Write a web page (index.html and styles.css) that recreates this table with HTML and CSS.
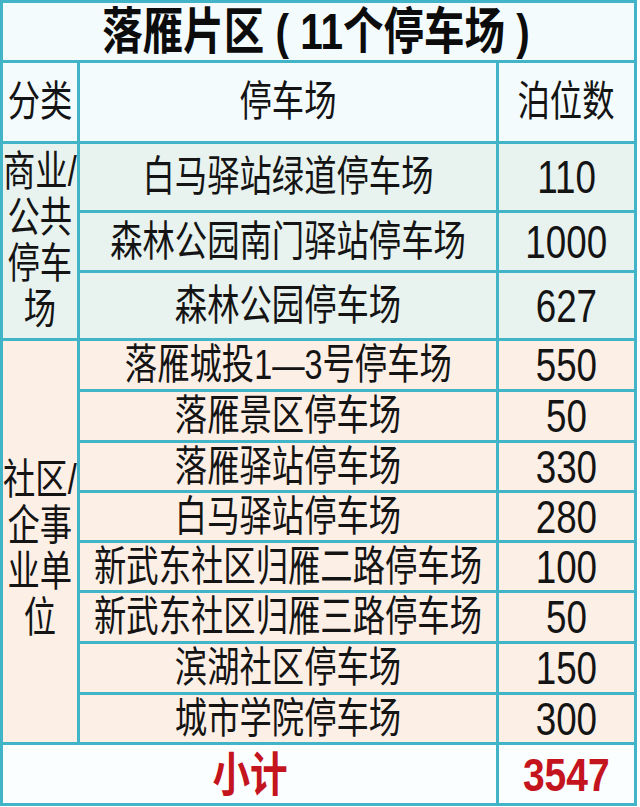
FILE: index.html
```html
<!DOCTYPE html>
<html lang="zh-CN">
<head>
<meta charset="utf-8">
<title>落雁片区停车场</title>
<link rel="stylesheet" href="styles.css">
</head>
<body>
<div class="table">
  <div class="cell title"><span class="t">落雁片区 ( 11个停车场 )</span></div>

  <div class="cell head"><span class="s">分类</span></div>
  <div class="cell head"><span class="s">停车场</span></div>
  <div class="cell head"><span class="s">泊位数</span></div>

  <div class="cell cat g1 span3"><span class="s lines">商业/<br>公共<br>停车<br>场</span></div>
  <div class="cell g1"><span class="s">白马驿站绿道停车场</span></div>
  <div class="cell g1"><span class="n">110</span></div>
  <div class="cell g1"><span class="s">森林公园南门驿站停车场</span></div>
  <div class="cell g1"><span class="n">1000</span></div>
  <div class="cell g1"><span class="s">森林公园停车场</span></div>
  <div class="cell g1"><span class="n">627</span></div>

  <div class="cell cat g2 span8"><span class="s lines low">社区/<br>企事<br>业单<br>位</span></div>
  <div class="cell g2"><span class="s">落雁城投1—3号停车场</span></div>
  <div class="cell g2"><span class="n">550</span></div>
  <div class="cell g2"><span class="s">落雁景区停车场</span></div>
  <div class="cell g2"><span class="n">50</span></div>
  <div class="cell g2"><span class="s">落雁驿站停车场</span></div>
  <div class="cell g2"><span class="n">330</span></div>
  <div class="cell g2"><span class="s">白马驿站停车场</span></div>
  <div class="cell g2"><span class="n">280</span></div>
  <div class="cell g2"><span class="s">新武东社区归雁二路停车场</span></div>
  <div class="cell g2"><span class="n">100</span></div>
  <div class="cell g2"><span class="s">新武东社区归雁三路停车场</span></div>
  <div class="cell g2"><span class="n">50</span></div>
  <div class="cell g2"><span class="s">滨湖社区停车场</span></div>
  <div class="cell g2"><span class="n">150</span></div>
  <div class="cell g2"><span class="s">城市学院停车场</span></div>
  <div class="cell g2"><span class="n">300</span></div>

  <div class="cell total span2c"><span class="r">小计</span></div>
  <div class="cell total"><span class="rn">3547</span></div>
</div>
</body>
</html>
```

FILE: styles.css
```css
html, body {
  margin: 0;
  padding: 0;
  background: #ffffff;
}

.table {
  width: 631px;
  padding: 3px;
  background: #41b5c7;
  display: grid;
  grid-template-columns: 74px 416px 135px;
  grid-template-rows: 57px 78px 66px 57px 65px 48px 48px 47px 47px 47px 48px 48px 47px 58px;
  gap: 3px;
  font-family: "Liberation Sans", "Noto Sans CJK SC", sans-serif;
  color: #141414;
}

.cell {
  display: flex;
  align-items: center;
  justify-content: center;
  overflow: visible;
  white-space: nowrap;
}

.title {
  grid-column: 1 / -1;
  background: #f4fbfc;
}

.head {
  background: #f4fbfc;
}

.g1 {
  background: #e8f2ee;
}

.g2 {
  background: #fcefe6;
}

.total {
  background: #fbfeff;
}

.span3 {
  grid-row: span 3;
}

.span8 {
  grid-row: span 8;
}

.span2c {
  grid-column: span 2;
}

.t {
  display: inline-block;
  font-size: 50px;
  font-weight: bold;
  line-height: 1;
  color: #0c0c0c;
  transform: scaleX(0.81);
  white-space: pre;
  margin-left: -6px;
}

.s {
  display: inline-block;
  font-size: 42px;
  line-height: 1;
  transform: scaleX(0.77);
}

.lines {
  text-align: center;
  line-height: 46px;
}

.low {
  margin-top: 14px;
}

.n {
  display: inline-block;
  font-size: 46px;
  line-height: 1;
  transform: scaleX(0.8);
}

.r {
  display: inline-block;
  font-size: 47px;
  font-weight: bold;
  line-height: 1;
  color: #c4141e;
  transform: scaleX(0.8);
}

.rn {
  display: inline-block;
  font-size: 47px;
  font-weight: bold;
  line-height: 1;
  color: #c4141e;
  transform: scaleX(0.83);
}
```
